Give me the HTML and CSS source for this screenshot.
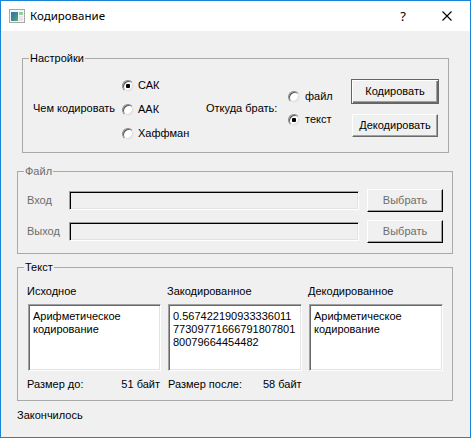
FILE: index.html
```html
<!DOCTYPE html>
<html lang="ru">
<head>
<meta charset="utf-8">
<title>Кодирование</title>
<link rel="stylesheet" href="styles.css">
</head>
<body>
<div class="window">
  <div class="titlebar">
    <svg class="app-icon" width="16" height="14" viewBox="0 0 16 14">
      <defs>
        <linearGradient id="pane" x1="0" y1="0" x2="1" y2="1">
          <stop offset="0" stop-color="#3a6fb0"/>
          <stop offset="0.6" stop-color="#3f8f8a"/>
          <stop offset="1" stop-color="#5bb86a"/>
        </linearGradient>
      </defs>
      <rect x="0.5" y="0.5" width="15" height="13" fill="#f7f7f7" stroke="#a8a8a8"/>
      <rect x="2" y="3" width="7" height="9" fill="url(#pane)"/>
      <rect x="10" y="3" width="4" height="3" fill="#8fd39a"/>
      <rect x="10" y="7" width="4" height="5" fill="#e6e6e6"/>
    </svg>
    <span class="title">Кодирование</span>
    <span class="help">?</span>
    <svg class="close" width="10" height="10" viewBox="0 0 10 10">
      <path d="M0.5 0.5 L9.5 9.5 M9.5 0.5 L0.5 9.5" stroke="#000" stroke-width="1.1" fill="none"/>
    </svg>
  </div>

  <div class="client">
    <section class="group group-settings">
      <span class="group-title">Настройки</span>
      <div class="settings-row">
        <span class="lbl lbl-what">Чем кодировать</span>
        <div class="radios radios-algo">
          <div class="radio-row"><span class="radio checked"></span><span>САК</span></div>
          <div class="radio-row"><span class="radio"></span><span>ААК</span></div>
          <div class="radio-row"><span class="radio"></span><span>Хаффман</span></div>
        </div>
        <span class="lbl lbl-src">Откуда брать:</span>
        <div class="radios radios-src">
          <div class="radio-row"><span class="radio"></span><span>файл</span></div>
          <div class="radio-row"><span class="radio checked"></span><span>текст</span></div>
        </div>
        <div class="actions">
          <button class="btn btn-default" type="button">Кодировать</button>
          <button class="btn" type="button">Декодировать</button>
        </div>
      </div>
    </section>

    <section class="group group-file">
      <span class="group-title disabled">Файл</span>
      <div class="file-grid">
        <span class="lbl disabled">Вход</span>
        <div class="field field-disabled"></div>
        <button class="btn btn-wide disabled" type="button">Выбрать</button>
        <span class="lbl disabled">Выход</span>
        <div class="field field-disabled"></div>
        <button class="btn btn-wide disabled" type="button">Выбрать</button>
      </div>
    </section>

    <section class="group group-text">
      <span class="group-title">Текст</span>
      <div class="text-grid">
        <span class="col-label">Исходное</span>
        <span class="col-label">Закодированное</span>
        <span class="col-label">Декодированное</span>

        <div class="field textbox">Арифметическое<br>кодирование</div>
        <div class="field textbox">0.567422190933336011<br>77309771666791807801<br>80079664454482</div>
        <div class="field textbox">Арифметическое<br>кодирование</div>

        <div class="size size-before"><span>Размер до:</span><span>51 байт</span></div>
        <div class="size size-after"><span class="size-name">Размер после:</span><span>58 байт</span></div>
        <div class="size"></div>
      </div>
    </section>

    <div class="status">Закончилось</div>
  </div>
</div>
</body>
</html>
```

FILE: styles.css
```css
* { box-sizing: border-box; }

html, body {
  margin: 0;
  padding: 0;
}

body {
  width: 471px;
  height: 438px;
  overflow: hidden;
  background: #ffffff;
  font-family: "Liberation Sans", Arial, sans-serif;
  font-size: 11px;
  line-height: 13px;
  color: #000000;
}

.window {
  width: 471px;
  height: 438px;
  border: 1px solid #1883d7;
  display: flex;
  flex-direction: column;
  background: #f0f0f0;
}

/* ---------- title bar ---------- */
.titlebar {
  flex: none;
  height: 30px;
  background: #ffffff;
  display: flex;
  align-items: center;
  padding: 0 18px 0 8px;
  font-family: "Noto Sans", "Open Sans", sans-serif;
  font-size: 11.5px;
  line-height: 16px;
}

.app-icon { flex: none; }

.title { margin-left: 5px; }

.help {
  margin-left: auto;
  font-size: 13px;
}

.close {
  flex: none;
  margin-left: 36px;
}

/* ---------- client ---------- */
.client {
  flex: 1;
  display: flex;
  flex-direction: column;
  align-items: flex-start;
}

.group {
  position: relative;
  border: 1px solid #a9a9a9;
}

.group-title {
  position: absolute;
  left: 6px;
  top: -7px;
  padding: 0 1px;
  background: #f0f0f0;
}

.disabled { color: #6d6d6d; }

.lbl { white-space: nowrap; }

/* ---------- settings ---------- */
.group-settings {
  margin: 27px 0 0 21px;
  width: 427px;
  height: 95px;
  padding: 20px 0 15px 10px;
}

.settings-row {
  display: flex;
  align-items: center;
  height: 100%;
}

.lbl-what { flex: none; width: 89px; }
.lbl-src { flex: none; width: 82px; }

.radios {
  flex: none;
  display: flex;
  flex-direction: column;
}

.radios-algo { width: 84px; margin-top: 3px; }
.radios-algo .radio-row { height: 24px; gap: 4px; }

.radios-src { width: 63px; }
.radios-src .radio-row { height: 23px; gap: 5px; }

.radio-row {
  display: flex;
  align-items: center;
}

.radio {
  flex: none;
  position: relative;
  width: 12px;
  height: 12px;
  border-radius: 50%;
  background: #ffffff;
  border: 1px solid;
  border-color: #8a8a8a #e8e8e8 #e8e8e8 #8a8a8a;
  box-shadow: inset 1px 1px 0 #5a5a5a, inset -1px -1px 0 #dcdcdc;
}

.radio.checked::after {
  content: "";
  position: absolute;
  left: 3px;
  top: 3px;
  width: 4px;
  height: 4px;
  border-radius: 1px;
  background: #000000;
}

.actions {
  flex: none;
  width: 88px;
  display: flex;
  flex-direction: column;
  align-items: center;
  gap: 10px;
}

/* ---------- buttons ---------- */
.btn {
  width: 86px;
  height: 23px;
  padding: 0;
  margin: 0;
  font-family: inherit;
  font-size: 11px;
  line-height: 13px;
  color: #000000;
  background: #f0f0f0;
  border: 1px solid;
  border-color: #ffffff #696969 #696969 #ffffff;
  border-radius: 0;
  box-shadow: inset -1px -1px 0 #a0a0a0;
}

.btn-default {
  width: 88px;
  height: 25px;
  border: 1px solid #646464;
  box-shadow: inset 1px 1px 0 #ffffff, inset -1px -1px 0 #696969, inset -2px -2px 0 #a0a0a0;
}

.btn-wide { width: 76px; }

.btn.disabled {
  color: #6d6d6d;
  border-color: #ffffff #000000 #000000 #ffffff;
  box-shadow: inset -1px -1px 0 #a0a0a0;
}

/* ---------- fields ---------- */
.field {
  background: #ffffff;
  border: 1px solid;
  border-color: #a0a0a0 #ffffff #ffffff #a0a0a0;
  box-shadow: inset 1px 1px 0 #696969, inset -1px -1px 0 #e3e3e3;
}

.field-disabled {
  height: 19px;
  background: #f0f0f0;
  border-color: #a0a0a0 #ffffff #ffffff #a0a0a0;
  box-shadow: inset 1px 1px 0 #000000, inset -1px -1px 0 #e3e3e3;
}

/* ---------- file group ---------- */
.group-file {
  margin: 18px 0 0 16px;
  width: 436px;
  height: 83px;
  padding: 17px 0 10px 9px;
}

.file-grid {
  display: grid;
  grid-template-columns: 34px 290px 76px;
  grid-template-rows: 23px 23px;
  column-gap: 8px;
  row-gap: 8px;
  align-items: center;
}

/* ---------- text group ---------- */
.group-text {
  margin: 13px 0 0 16px;
  width: 436px;
  height: 134px;
  padding: 17px 9px 0 10px;
}

.text-grid {
  display: grid;
  grid-template-columns: 133px 134px 134px;
  grid-template-rows: 13px 67px 13px;
  column-gap: 7px;
  row-gap: 6px;
}

.col-label {
  margin-left: -1px;
  white-space: nowrap;
}

.textbox {
  padding: 5px 4px 0 4px;
  white-space: nowrap;
  overflow: hidden;
}

.size {
  margin-top: 1px;
  display: flex;
  white-space: nowrap;
}

.size-before {
  justify-content: space-between;
  padding-right: 1px;
  margin-left: -1px;
}

.size-name {
  display: inline-block;
  width: 95px;
}

/* ---------- status ---------- */
.status {
  margin: 8px 0 0 16px;
}
```
